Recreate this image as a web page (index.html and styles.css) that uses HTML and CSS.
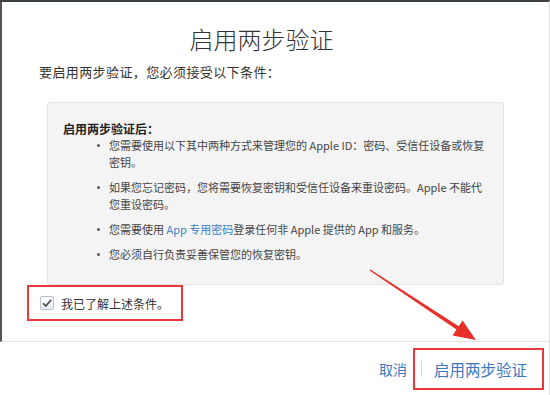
FILE: index.html
```html
<!DOCTYPE html>
<html lang="zh-CN">
<head>
    <meta charset="UTF-8">
    <title>启用两步验证</title>
    <link rel="stylesheet" href="styles.css">
</head>
<body>
    <div class="dialog">
        <div class="dialog-body">
            <h1 class="title">启用两步验证</h1>
            <p class="subtitle">要启用两步验证，您必须接受以下条件：</p>

            <div class="terms">
                <h3>启用两步验证后：</h3>
                <ul>
                    <li>您需要使用以下其中两种方式来管理您的 Apple ID：密码、受信任设备或恢复密钥。</li>
                    <li>如果您忘记密码，您将需要恢复密钥和受信任设备来重设密码。Apple 不能代您重设密码。</li>
                    <li>您需要使用 <a href="#" class="link">App 专用密码</a>登录任何非 Apple 提供的 App 和服务。</li>
                    <li>您必须自行负责妥善保管您的恢复密钥。</li>
                </ul>
            </div>

            <label class="agree mark">
                <span class="checkbox">
                    <svg width="12" height="12" viewBox="0 0 12 12"><path d="M2 6.2 L4.8 9 L10.2 2.8" fill="none" stroke="#444" stroke-width="1.6"/></svg>
                </span>
                我已了解上述条件。
            </label>
        </div>

        <div class="dialog-footer">
            <a href="#" class="btn">取消</a>
            <div class="confirm mark">
                <span class="divider"></span>
                <a href="#" class="btn btn-main">启用两步验证</a>
            </div>
        </div>

        <!-- annotation arrow -->
        <svg class="arrow" width="550" height="395" viewBox="0 0 550 395">
            <polygon points="370.4,269.4 458.7,326.2 462.6,320.4 476,340 452.6,335.4 456.5,329.6 369.6,270.6" fill="#e8302a"/>
        </svg>
    </div>
</body>
</html>
```

FILE: styles.css
```css
* {
    margin: 0;
    padding: 0;
    box-sizing: border-box;
}

body {
    font-family: "Noto Sans CJK SC", "Noto Sans", sans-serif;
    background: #fff;
    color: #333;
    width: 550px;
    height: 395px;
    overflow: hidden;
}

.dialog {
    position: relative;
    height: 395px;
    border-top: 2px solid #3b3f46;
    border-right: 1px solid #ddd;
}

.dialog-body {
    height: 340px;
    border-left: 2px solid #555;
    border-bottom: 1px solid #e3e3e3;
    padding-top: 22px;
}

.title {
    font-size: 24px;
    font-weight: 300;
    line-height: 30px;
    color: #333;
    text-align: center;
    padding-right: 28px;
}

.subtitle {
    font-size: 13px;
    letter-spacing: 0.4px;
    line-height: 18px;
    margin: 9px 0 0 37px;
    color: #333;
}

.terms {
    margin: 21px 0 0 45px;
    width: 457px;
    height: 183px;
    background: #f4f4f4;
    border: 1px solid #e4e4e4;
    border-radius: 3px;
    padding: 17px 18px 0 15px;
}

.terms h3 {
    font-size: 12px;
    font-weight: bold;
    line-height: 17px;
    color: #222;
}

.terms ul {
    padding-left: 46px;
    list-style: none;
}

.terms li {
    position: relative;
    font-size: 11px;
    line-height: 17px;
    color: #444;
    margin-bottom: 8px;
}

.terms li::before {
    content: '';
    position: absolute;
    left: -12px;
    top: 7px;
    width: 3px;
    height: 3px;
    border-radius: 50%;
    background: #555;
}

.link {
    color: #3a80c6;
    text-decoration: none;
}

.mark {
    border: 2px solid #e8383c;
}

.agree {
    display: flex;
    align-items: center;
    gap: 7px;
    width: 156px;
    height: 36px;
    margin: 0 0 0 25px;
    padding-left: 11px;
    font-size: 12px;
    color: #333;
}

.checkbox {
    display: flex;
    align-items: center;
    justify-content: center;
    width: 14px;
    height: 14px;
    border: 1px solid #b9c3cf;
    border-radius: 2px;
    background: linear-gradient(#fff, #e8edf2);
}

.dialog-footer {
    display: flex;
    align-items: center;
    justify-content: flex-end;
    gap: 6px;
    padding: 5px 5px 0 0;
    height: 48px;
}

.btn {
    font-size: 14px;
    color: #3b78bf;
    text-decoration: none;
    line-height: 20px;
}

.btn-main {
    font-size: 15.5px;
}

.confirm {
    display: flex;
    align-items: center;
    width: 131px;
    height: 42px;
    padding-left: 6px;
}

.divider {
    width: 1px;
    height: 16px;
    background: #d8d8d8;
    margin-right: 12px;
}

.arrow {
    position: absolute;
    left: 0;
    top: -2px;
    pointer-events: none;
}
```
